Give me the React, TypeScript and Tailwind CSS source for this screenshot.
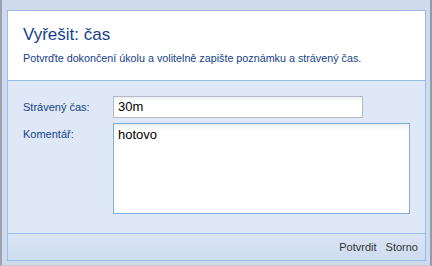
import React from 'react';

const font = { fontFamily: 'Tahoma, "DejaVu Sans", "Liberation Sans", sans-serif' };

const App: React.FC = () => {
  return (
    <div
      className="w-[432px] h-[266px] bg-[#cfdbec] border-l-2 border-r-2 border-b border-l-[#9aa3ae] border-r-[#8f9cad] border-b-[#c0c8d2] pt-[10px] pl-[5px] pr-[4px] pb-[4px] flex flex-col"
      style={font}
    >
      <div className="flex-1 flex flex-col border border-[#99bbe8]">
        <div className="h-[70px] bg-white border-b border-[#99bbe8] px-[15px] pt-[14px]">
          <div className="text-[17px] leading-[20px] text-[#15428b] font-['Liberation_Sans',sans-serif]">
            Vyřešit: čas
          </div>
          <div className="mt-[6px] text-[10.75px] leading-[14px] text-[#15428b] font-['Liberation_Sans',sans-serif]">
            Potvrďte dokončení úkolu a volitelně zapište poznámku a strávený čas.
          </div>
        </div>
        <div className="flex-1 bg-[#dfe8f6] pl-[15px] pr-[14px] pt-[15px] flex flex-col gap-[5px] font-['Liberation_Sans',sans-serif]">
          <div className="flex items-center">
            <label className="w-[90px] text-[11px] text-[#15428b]">Strávený čas:</label>
            <div className="w-[250px] h-[22px] border border-[#b5b8c8] bg-gradient-to-b from-[#eef0f0] to-white to-[25%] px-[4px] flex items-center text-[13px] text-black">
              30m
            </div>
          </div>
          <div className="flex items-start">
            <label className="w-[90px] text-[11px] text-[#15428b] pt-[3px]">Komentář:</label>
            <div className="w-[297px] h-[91px] border border-[#7eadd9] bg-gradient-to-b from-[#eef0f0] to-white to-[8%] px-[4px] pt-[1px] text-[13px] text-black">
              hotovo
            </div>
          </div>
        </div>
        <div className="h-[27px] border-t border-[#99bbe8] bg-gradient-to-b from-[#dae5f4] to-[#cedcef] flex items-center justify-end gap-[9px] pr-[7px] text-[11px] text-[#333333] font-['Liberation_Sans',sans-serif]">
          <span>Potvrdit</span>
          <span>Storno</span>
        </div>
      </div>
    </div>
  );
};

export default App;
